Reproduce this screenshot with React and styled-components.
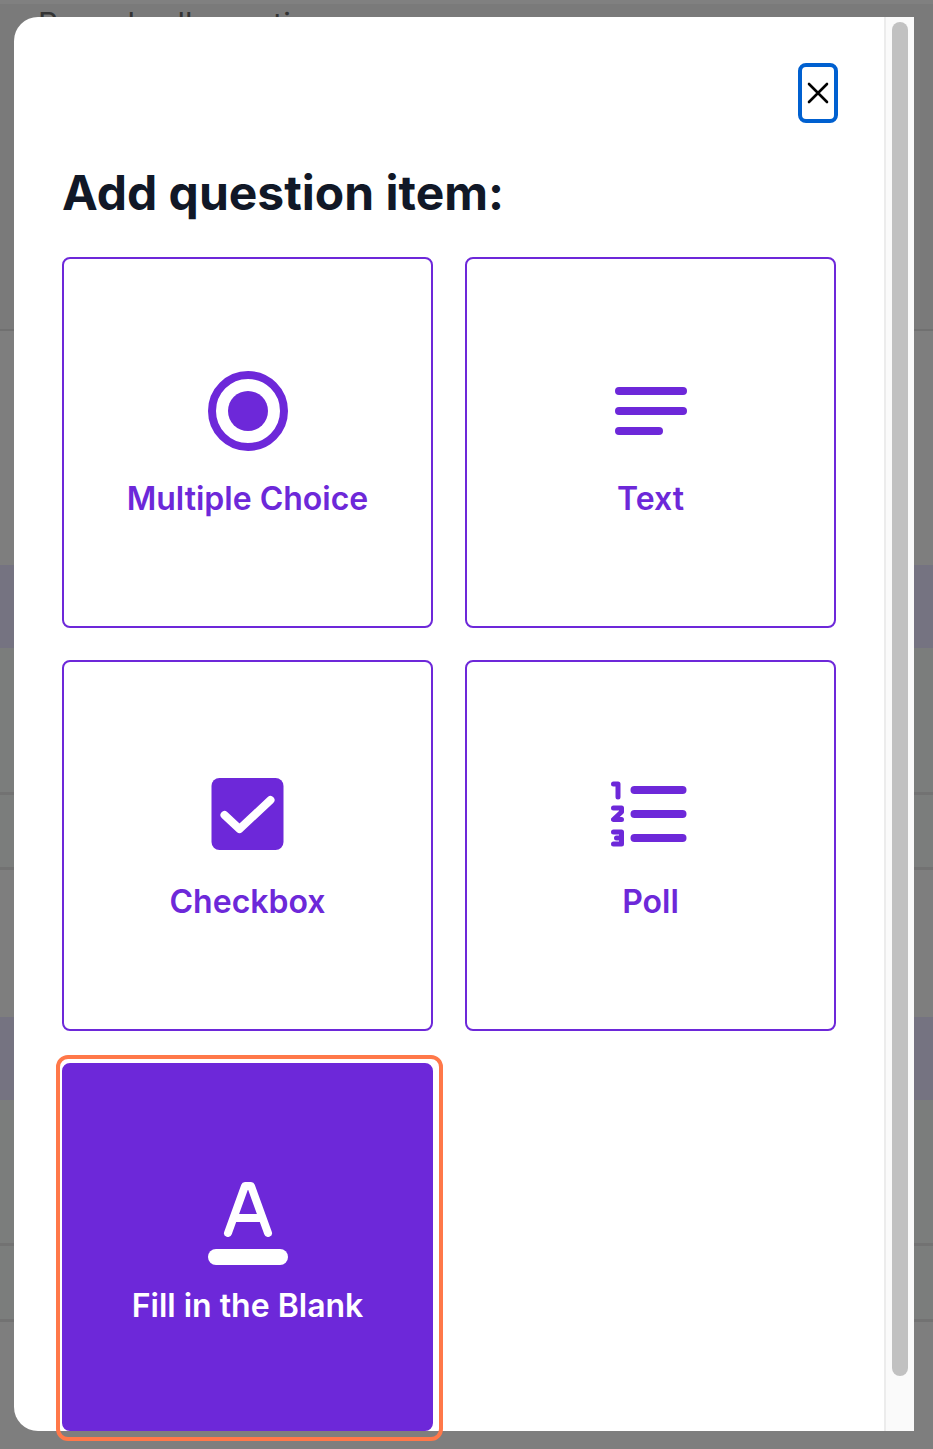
import React from "react";
import styled, { createGlobalStyle } from "styled-components";

const Global = createGlobalStyle`
  html, body { margin: 0; padding: 0; background: #7e7e7e; font-family: Inter, "Liberation Sans", sans-serif; }
  body { width: 933px; height: 1449px; overflow: hidden; }
`;

const Page = styled.div`
  position: relative;
  width: 933px;
  height: 1449px;
  overflow: hidden;
  background: #7e7e7e;
`;

const PageTop = styled.div`
  height: 4px;
  background: #808080;
`;

const PageHeading = styled.div`
  height: 327px;
  padding: 2px 0 0 38px;
  box-sizing: border-box;
  background: #7a7a7a;
  border-bottom: 2px solid #707070;
  font-size: 31px;
  line-height: 36px;
  color: #333;
`;

const PageRow = styled.div`
  height: ${(p) => p.$h}px;
  box-sizing: border-box;
  background: ${(p) => p.$bg || "#7e7e7e"};
  border-bottom: ${(p) => (p.$line ? "3px solid #727272" : "none")};
`;

const Modal = styled.div`
  position: absolute;
  left: 14px;
  top: 17px;
  width: 900px;
  height: 1414px;
  display: flex;
  background: #fff;
  border-radius: 24px 0 0 24px;
`;

const Content = styled.div`
  flex: 1;
  display: flex;
  flex-direction: column;
  padding: 46px 46px 0 48px;
  min-width: 0;
`;

const CloseRow = styled.div`
  display: flex;
  justify-content: flex-end;
`;

const CloseButton = styled.button`
  width: 40px;
  height: 60px;
  padding: 0;
  display: flex;
  align-items: center;
  justify-content: center;
  background: #fff;
  border: 4px solid #0060d0;
  border-radius: 8px;
  box-sizing: border-box;
  color: #000;
`;

const Title = styled.h2`
  margin: 42px 0 36px 0;
  font-size: 48px;
  line-height: 56px;
  font-weight: 700;
  color: #111827;
`;

const Grid = styled.div`
  display: grid;
  grid-template-columns: 371px 371px;
  grid-auto-rows: 371px;
  gap: 32px;
`;

const Card = styled.button`
  position: relative;
  display: flex;
  flex-direction: column;
  align-items: center;
  justify-content: flex-start;
  padding: 0;
  box-sizing: border-box;
  height: ${(p) => (p.$active ? "368px" : "371px")};
  border: 2px solid #6d28d9;
  border-radius: 8px;
  background: ${(p) => (p.$active ? "#6d28d9" : "#fff")};
  color: ${(p) => (p.$active ? "#fff" : "#6d28d9")};
  font-family: inherit;
  ${(p) =>
    p.$active &&
    `&::after {
      content: "";
      position: absolute;
      left: -8px;
      top: -10px;
      right: -12px;
      bottom: -12px;
      border: 4px solid #ff7849;
      border-radius: 12px;
      pointer-events: none;
    }`}
`;

const IconBox = styled.div`
  margin-top: 110px;
  width: 80px;
  height: 84px;
  display: flex;
  align-items: center;
  justify-content: center;
`;

const Label = styled.span`
  margin-top: ${(p) => (p.$active ? "25px" : "24px")};
  font-size: 32px;
  line-height: 44px;
  font-weight: 600;
`;

const Track = styled.div`
  width: 30px;
  flex: none;
  box-sizing: border-box;
  background: #fafafa;
  border-left: 2px solid #ececec;
  padding: 5px 6px 55px 6px;
`;

const Thumb = styled.div`
  width: 16px;
  height: 100%;
  background: #c1c1c1;
  border-radius: 8px;
`;

const RadioIcon = () => (
  <svg width="80" height="80" viewBox="0 0 80 80">
    <circle cx="40" cy="40" r="36" fill="none" stroke="currentColor" strokeWidth="8" />
    <circle cx="40" cy="40" r="20" fill="currentColor" />
  </svg>
);

const TextIcon = () => (
  <svg width="72" height="52" viewBox="0 0 72 52" fill="none" stroke="currentColor" strokeWidth="8" strokeLinecap="round">
    <path d="M4 6H68" />
    <path d="M4 26H68" />
    <path d="M4 46H44" />
  </svg>
);

const CheckIcon = () => (
  <svg width="74" height="72" viewBox="0 0 74 72">
    <rect x="0.5" width="72" height="72" rx="8" fill="currentColor" />
    <path d="M13.5 37L28.5 51L59.5 22" fill="none" stroke="#fff" strokeWidth="8" strokeLinecap="round" strokeLinejoin="round" />
  </svg>
);

const PollIcon = () => (
  <svg width="80" height="68" viewBox="0 0 80 68" fill="none" stroke="currentColor" strokeLinecap="round" strokeLinejoin="round">
    <g strokeWidth="8">
      <path d="M23.5 10H71.5" />
      <path d="M23.5 34H71.5" />
      <path d="M23.5 58H71.5" />
    </g>
    <g strokeWidth="5">
      <path d="M2.5 4H7V17" />
      <path d="M2.5 28H10.5V32L2.5 39.5H10.5" />
      <path d="M2.5 52H10.5V64H2.5M5.5 58H10.5" />
    </g>
  </svg>
);

const FillIcon = () => (
  <svg width="80" height="84" viewBox="0 0 80 84" overflow="visible" fill="none" stroke="currentColor" strokeLinecap="round" strokeLinejoin="round">
    <path d="M20 58L37 11H43L60 58" strokeWidth="8" />
    <path d="M28 43H52" strokeWidth="8" strokeLinecap="butt" />
    <path d="M8 82H72" strokeWidth="16" />
  </svg>
);

const items = [
  { label: "Multiple Choice", Icon: RadioIcon },
  { label: "Text", Icon: TextIcon },
  { label: "Checkbox", Icon: CheckIcon },
  { label: "Poll", Icon: PollIcon },
  { label: "Fill in the Blank", Icon: FillIcon, active: true },
];

export default function App() {
  return (
    <Page>
      <Global />
      <PageTop />
      <PageHeading>Reveals all questions</PageHeading>
      <PageRow $h={234} />
      <PageRow $h={83} $bg="#757381" />
      <PageRow $h={147} $bg="#7b7d7c" $line />
      <PageRow $h={75} $bg="#7b7d7c" $line />
      <PageRow $h={147} />
      <PageRow $h={83} $bg="#757381" />
      <PageRow $h={146} $bg="#7b7d7c" $line />
      <PageRow $h={76} $bg="#7b7d7c" $line />
      <PageRow $h={127} />
      <Modal role="dialog" aria-label="Add question item">
        <Content>
          <CloseRow>
            <CloseButton aria-label="Close">
              <svg width="22" height="22" viewBox="0 0 22 22" fill="none" stroke="currentColor" strokeWidth="2.6" strokeLinecap="round">
                <path d="M2 2L20 20M20 2L2 20" />
              </svg>
            </CloseButton>
          </CloseRow>
          <Title>Add question item:</Title>
          <Grid>
            {items.map(({ label, Icon, active }) => (
              <Card key={label} $active={active}>
                <IconBox>
                  <Icon />
                </IconBox>
                <Label $active={active}>{label}</Label>
              </Card>
            ))}
          </Grid>
        </Content>
        <Track>
          <Thumb />
        </Track>
      </Modal>
    </Page>
  );
}
